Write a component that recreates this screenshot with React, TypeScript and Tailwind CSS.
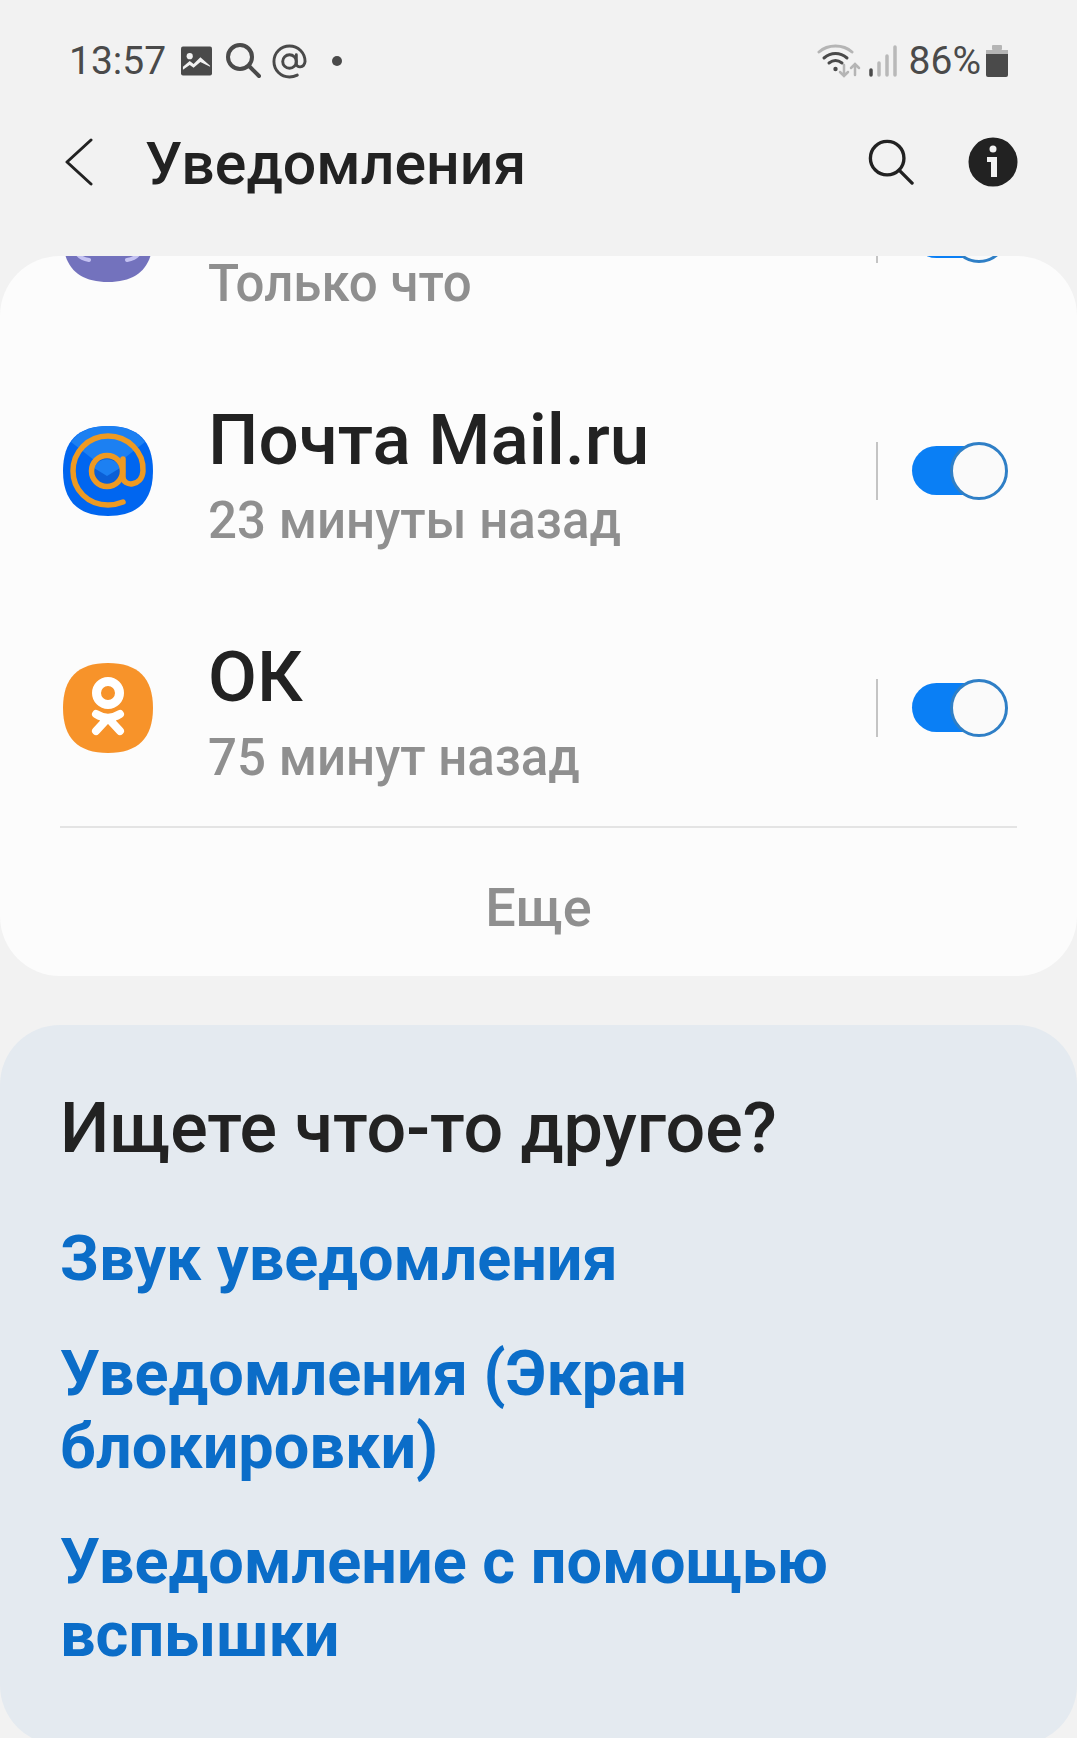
function Toggle() {
    return (
        <div className="relative flex h-[58px] w-[96px] items-center">
            <div className="h-[49px] w-[90px] rounded-full bg-[#0a7ff5]" />
            <div className="absolute right-0 top-0 h-[58px] w-[58px] rounded-full border-[3px] border-[#2f7fc6] bg-[#fafafa]" />
        </div>
    );
}

const squircle = 'M45 0C75 0 90 15 90 45S75 90 45 90 0 75 0 45 15 0 45 0Z';

function ViberIcon() {
    return (
        <svg viewBox="0 0 90 90" className="h-[90px] w-[90px] translate-y-[3px]">
            <path d={squircle} fill="#7372bd" />
            <path d="M14 61c2 4 6 6 12 7M76 61c-2 4-6 6-12 7" fill="none" stroke="#c4c2f2" strokeWidth="4" strokeLinecap="round" />
        </svg>
    );
}

function MailIcon() {
    return (
        <svg viewBox="0 0 90 90" className="h-[90px] w-[90px]">
            <path d={squircle} fill="#0066f0" />
            <path d="M45 0C62 0 74 5 82 16L45 45 8 16C16 5 28 0 45 0Z" fill="#1c80f2" />
            <circle cx="44" cy="45" r="15" fill="#0b5fd6" />
            <path d="M31 42a14 14 0 0 1 26 0l-13 8Z" fill="#1c80f2" />
            <circle cx="44" cy="45" r="15.500" fill="none" stroke="#ee9a22" strokeWidth="5.500" />
            <path d="M60 33v18c0 10 19 10 20-6 1-19-15-35-35-35C25 10 10 26 10 45s15 34 35 34c5 0 10-1 15-3" fill="none" stroke="#ee9a22" strokeWidth="5.500" strokeLinecap="round" />
        </svg>
    );
}

function OkIcon() {
    return (
        <svg viewBox="0 0 90 90" className="h-[90px] w-[90px]">
            <path d={squircle} fill="#f7932a" />
            <circle cx="45" cy="30" r="11.500" fill="none" stroke="#fff" strokeWidth="9" />
            <path d="M33 51c8 5 16 5 24 0M45 55 33 68M45 55l12 13" fill="none" stroke="#fff" strokeWidth="8" strokeLinecap="round" strokeLinejoin="round" />
        </svg>
    );
}

function Row({ icon, title, sub }: { icon: React.ReactNode; title?: string; sub: string }) {
    return (
        <div className="flex h-[237px] items-center pl-[63px] pr-[69px]">
            <div className="w-[145px] shrink-0">{icon}</div>
            <div className="flex-1 pt-[6px]">
                {/* the first row's title is scrolled out of the card */}
                <div className="h-[84px] text-[71px] font-medium leading-[84px] text-[#222222]">{title}</div>
                <div className="mt-[10px] text-[51px] font-medium leading-[58px] text-[#8f8f8f]">{sub}</div>
            </div>
            <div className="mr-[34px] h-[58px] w-[2px] bg-[#c4c4c4]" />
            <Toggle />
        </div>
    );
}

export default function App() {
    return (
        <main className="h-[1738px] w-[1077px] overflow-hidden bg-[#f2f2f2] font-['Roboto',sans-serif]">
            {/* status bar */}
            <div className="flex h-[122px] items-center justify-between px-[69px]">
                <div className="flex items-center text-[#4a4a4a]">
                    <span className="text-[39px] leading-none">13:57</span>
                    <svg viewBox="0 0 32 30" className="ml-[15px] h-[30px] w-[31px]">
                        <rect width="32" height="30" rx="2" fill="#4a4a4a" />
                        <circle cx="9" cy="10" r="3.200" fill="#f2f2f2" />
                        <path d="M2 21l7-6 4 3 7-7 10 9v1l-10-5-7 6-4-3-7 5Z" fill="#f2f2f2" />
                    </svg>
                    <svg viewBox="0 0 36 36" className="ml-[13px] h-[36px] w-[36px]" fill="none" stroke="#4a4a4a" strokeWidth="4" strokeLinecap="round">
                        <circle cx="15" cy="14" r="12" />
                        <path d="M24 23l10 10" />
                    </svg>
                    <svg viewBox="0 0 36 36" className="ml-[11px] h-[35px] w-[35px]" fill="none" stroke="#4a4a4a" strokeWidth="3" strokeLinecap="round">
                        <circle cx="18" cy="18" r="7" />
                        <path d="M25 11v9c0 5 8 5 9-2 0-9-7-16-16-16S2 9 2 18s7 16 16 16c3 0 6-1 8-2" />
                    </svg>
                    <div className="ml-[25px] h-[10px] w-[10px] rounded-full bg-[#4a4a4a]" />
                </div>
                <div className="flex items-center text-[#4a4a4a]">
                    <svg viewBox="0 0 44 34" className="h-[34px] w-[44px]" fill="none" strokeLinecap="round">
                        <path d="M2 8C11 0 26 0 35 8" stroke="#b5b5b5" strokeWidth="3" />
                        <path d="M7 14C14 8 23 8 30 14" stroke="#4a4a4a" strokeWidth="3" />
                        <path d="M12 19c4-3 9-3 13 0" stroke="#4a4a4a" strokeWidth="3" />
                        <circle cx="18.500" cy="25" r="2.200" fill="#4a4a4a" />
                        <path d="M27 21v10M23 28l4 4 4-4M38 31V20M34 24l4-4 4 4" stroke="#b5b5b5" strokeWidth="2.500" />
                    </svg>
                    <svg viewBox="0 0 30 32" className="ml-[7px] h-[32px] w-[30px]" fill="none" strokeWidth="3.500" strokeLinecap="round">
                        <path d="M3 25v5" stroke="#4a4a4a" />
                        <path d="M11 18v12M19 11v19M27 2v28" stroke="#b9b9b9" />
                    </svg>
                    <span className="ml-[11px] text-[39px] leading-none">86%</span>
                    <svg viewBox="0 0 22 32" className="ml-[5px] h-[32px] w-[22px]">
                        <rect x="6" y="0" width="10" height="5" rx="1" fill="#b5b5b5" />
                        <path d="M0 5h22v4H0Z" fill="#b5b5b5" />
                        <path d="M0 9h22v21a2 2 0 0 1-2 2H2a2 2 0 0 1-2-2Z" fill="#4a4a4a" />
                    </svg>
                </div>
            </div>

            {/* header */}
            <div className="flex h-[80px] items-center pl-[65px] pr-[59px]">
                <svg viewBox="0 0 28 48" className="h-[48px] w-[28px]" fill="none" stroke="#222222" strokeWidth="3" strokeLinecap="round" strokeLinejoin="round">
                    <path d="M26 2 2 24l24 22" />
                </svg>
                <h1 className="ml-[52px] flex-1 pt-[2px] text-[59px] font-medium leading-none text-[#222222]">Уведомления</h1>
                <svg viewBox="0 0 48 48" className="h-[46px] w-[46px]" fill="none" stroke="#222222" strokeWidth="3.500" strokeLinecap="round">
                    <circle cx="20" cy="20" r="17.500" />
                    <path d="M33 33l13 13" />
                </svg>
                <svg viewBox="0 0 50 50" className="ml-[54px] h-[50px] w-[50px]">
                    <circle cx="25" cy="25" r="24.500" fill="#222222" />
                    <circle cx="25" cy="12" r="3.500" fill="#f2f2f2" />
                    <path d="M19 20h10v20h-6V25h-4Z" fill="#f2f2f2" />
                </svg>
            </div>

            {/* notification card */}
            <section className="mt-[54px] h-[720px] overflow-hidden rounded-[60px] bg-[#fcfcfc]">
                <div className="-mt-[141px]">
                    <Row icon={<ViberIcon />} sub="Только что" />
                    <Row icon={<MailIcon />} title="Почта Mail.ru" sub="23 минуты назад" />
                    <Row icon={<OkIcon />} title="ОК" sub="75 минут назад" />
                </div>
                <div className="mx-[60px] h-[2px] bg-[#e4e4e4]" />
                <div className="pt-[50px] text-center text-[54px] font-medium leading-[60px] text-[#8f8f8f]">Еще</div>
            </section>

            {/* suggestions */}
            <section className="mt-[49px] h-[720px] rounded-[60px] bg-[#e4eaf0] pl-[60px] pr-[60px] pt-[63px]">
                <h2 className="text-[70px] font-medium leading-[80px] text-[#222222]">Ищете что-то другое?</h2>
                <div className="mt-[54px] flex flex-col gap-[42px] text-[63px] font-bold leading-[73px] text-[#0b6dc8]">
                    <div>Звук уведомления</div>
                    <div>Уведомления (Экран<br />блокировки)</div>
                    <div>Уведомление с помощью<br />вспышки</div>
                </div>
            </section>
        </main>
    );
}
